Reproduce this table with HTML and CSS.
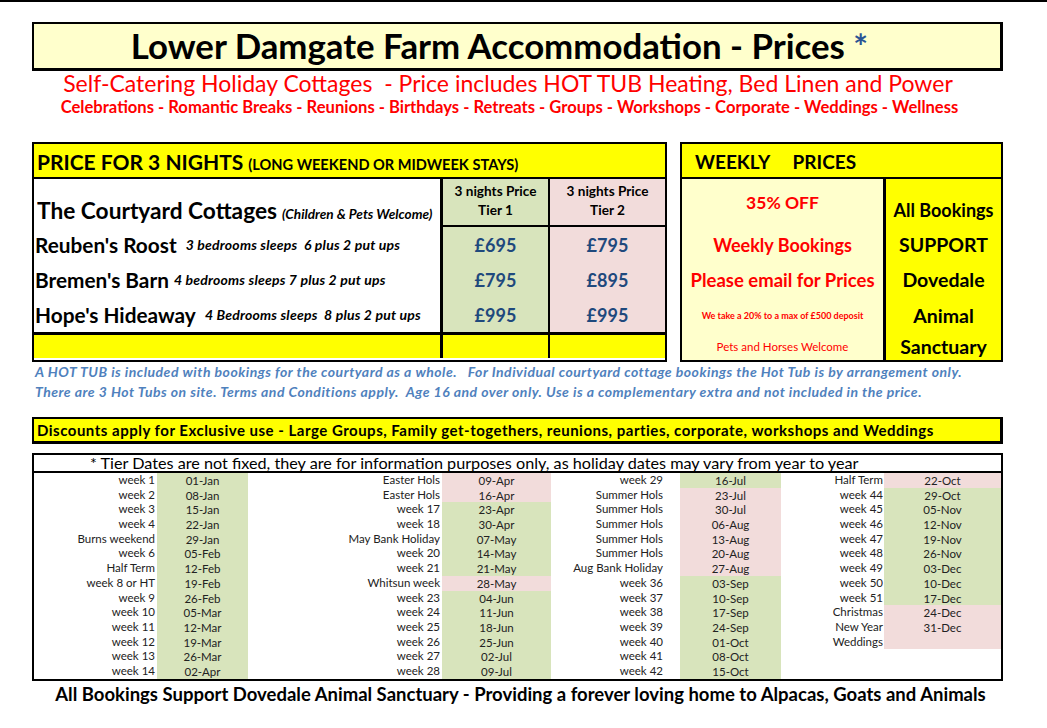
FILE: index.html
```html
<!DOCTYPE html>
<html>
<head>
<meta charset="utf-8">
<link rel="stylesheet" href="styles.css">
</head>
<body>
<div class="page">
  <div class="title-box"><h1 class="title">Lower Damgate Farm Accommodation - Prices <span class="ast">*</span></h1></div>
  <div class="sub1">Self-Catering Holiday Cottages&nbsp; - Price includes HOT TUB Heating, Bed Linen and Power</div>
  <div class="sub2">Celebrations - Romantic Breaks - Reunions - Birthdays - Retreats - Groups - Workshops - Corporate - Weddings - Wellness</div>

  <div class="prices">
    <div class="p3">
      <div class="p3-head"><span class="big">PRICE FOR 3 NIGHTS</span> <span class="small">(LONG WEEKEND OR MIDWEEK STAYS)</span></div>
      <div class="name-top"><span class="cy">The Courtyard Cottages</span> <em class="cy-note">(Children &amp; Pets Welcome)</em></div>
      <div class="tier-h t1">3 nights Price<br>Tier 1</div>
      <div class="tier-h t2">3 nights Price<br>Tier 2</div>
      <div class="names">
        <div class="nm"><span class="cot">Reuben's Roost</span>&nbsp; <em class="det">3 bedrooms sleeps&nbsp; 6 plus 2 put ups</em></div>
        <div class="nm"><span class="cot">Bremen's Barn</span> <em class="det">4 bedrooms sleeps 7 plus 2 put ups</em></div>
        <div class="nm"><span class="cot">Hope's Hideaway</span>&nbsp; <em class="det">4 Bedrooms sleeps&nbsp; 8 plus 2 put ups</em></div>
      </div>
      <div class="tier-p t1"><div>£695</div><div>£795</div><div>£995</div></div>
      <div class="tier-p t2"><div>£795</div><div>£895</div><div>£995</div></div>
      <div class="foot f1"></div>
      <div class="foot f2"></div>
      <div class="foot f3"></div>
    </div>

    <div class="wk">
      <div class="wk-head">WEEKLY&nbsp;&nbsp;&nbsp;&nbsp; PRICES</div>
      <div class="wk-left">
        <div class="r1 red-m">35% OFF</div>
        <div class="red-l">Weekly Bookings</div>
        <div class="red-l">Please email for Prices</div>
        <div class="red-xs">We take a 20% to a max of £500 deposit</div>
        <div class="red-s">Pets and Horses Welcome</div>
      </div>
      <div class="wk-right">
        <div class="r1b">All Bookings</div>
        <div>SUPPORT</div>
        <div>Dovedale</div>
        <div>Animal</div>
        <div>Sanctuary</div>
      </div>
    </div>
  </div>

  <div class="notes">
    <p>A HOT TUB is included with bookings for the courtyard as a whole.&nbsp;&nbsp; For Individual courtyard cottage bookings the Hot Tub is by arrangement only.</p>
    <p>There are 3 Hot Tubs on site. Terms and Conditions apply.&nbsp; Age 16 and over only. Use is a complementary extra and not included in the price.</p>
  </div>

  <div class="discount">Discounts apply for Exclusive use - Large Groups, Family get-togethers, reunions, parties, corporate, workshops and Weddings</div>

  <div class="dates">
    <div class="dates-head">* Tier Dates are not fixed, they are for information purposes only, as holiday dates may vary from year to year</div>
    <div class="dates-body">
      <div class="grp g1">
        <div class="lb">week 1</div><div class="dt g">01-Jan</div>
        <div class="lb">week 2</div><div class="dt g">08-Jan</div>
        <div class="lb">week 3</div><div class="dt g">15-Jan</div>
        <div class="lb">week 4</div><div class="dt g">22-Jan</div>
        <div class="lb">Burns weekend</div><div class="dt g">29-Jan</div>
        <div class="lb">week 6</div><div class="dt g">05-Feb</div>
        <div class="lb">Half Term</div><div class="dt g">12-Feb</div>
        <div class="lb">week 8 or HT</div><div class="dt g">19-Feb</div>
        <div class="lb">week 9</div><div class="dt g">26-Feb</div>
        <div class="lb">week 10</div><div class="dt g">05-Mar</div>
        <div class="lb">week 11</div><div class="dt g">12-Mar</div>
        <div class="lb">week 12</div><div class="dt g">19-Mar</div>
        <div class="lb">week 13</div><div class="dt g">26-Mar</div>
        <div class="lb">week 14</div><div class="dt g">02-Apr</div>
      </div>
      <div class="grp g2">
        <div class="lb">Easter Hols</div><div class="dt p">09-Apr</div>
        <div class="lb">Easter Hols</div><div class="dt p">16-Apr</div>
        <div class="lb">week 17</div><div class="dt g">23-Apr</div>
        <div class="lb">week 18</div><div class="dt g">30-Apr</div>
        <div class="lb">May Bank Holiday</div><div class="dt g">07-May</div>
        <div class="lb">week 20</div><div class="dt g">14-May</div>
        <div class="lb">week 21</div><div class="dt g">21-May</div>
        <div class="lb">Whitsun week</div><div class="dt p">28-May</div>
        <div class="lb">week 23</div><div class="dt g">04-Jun</div>
        <div class="lb">week 24</div><div class="dt g">11-Jun</div>
        <div class="lb">week 25</div><div class="dt g">18-Jun</div>
        <div class="lb">week 26</div><div class="dt g">25-Jun</div>
        <div class="lb">week 27</div><div class="dt g">02-Jul</div>
        <div class="lb">week 28</div><div class="dt g">09-Jul</div>
      </div>
      <div class="grp g3">
        <div class="lb">week 29</div><div class="dt g">16-Jul</div>
        <div class="lb">Summer Hols</div><div class="dt p">23-Jul</div>
        <div class="lb">Summer Hols</div><div class="dt p">30-Jul</div>
        <div class="lb">Summer Hols</div><div class="dt p">06-Aug</div>
        <div class="lb">Summer Hols</div><div class="dt p">13-Aug</div>
        <div class="lb">Summer Hols</div><div class="dt p">20-Aug</div>
        <div class="lb">Aug Bank Holiday</div><div class="dt p">27-Aug</div>
        <div class="lb">week 36</div><div class="dt g">03-Sep</div>
        <div class="lb">week 37</div><div class="dt g">10-Sep</div>
        <div class="lb">week 38</div><div class="dt g">17-Sep</div>
        <div class="lb">week 39</div><div class="dt g">24-Sep</div>
        <div class="lb">week 40</div><div class="dt g">01-Oct</div>
        <div class="lb">week 41</div><div class="dt g">08-Oct</div>
        <div class="lb">week 42</div><div class="dt g">15-Oct</div>
      </div>
      <div class="grp g4">
        <div class="lb">Half Term</div><div class="dt p">22-Oct</div>
        <div class="lb">week 44</div><div class="dt g">29-Oct</div>
        <div class="lb">week 45</div><div class="dt g">05-Nov</div>
        <div class="lb">week 46</div><div class="dt g">12-Nov</div>
        <div class="lb">week 47</div><div class="dt g">19-Nov</div>
        <div class="lb">week 48</div><div class="dt g">26-Nov</div>
        <div class="lb">week 49</div><div class="dt g">03-Dec</div>
        <div class="lb">week 50</div><div class="dt g">10-Dec</div>
        <div class="lb">week 51</div><div class="dt g">17-Dec</div>
        <div class="lb">Christmas</div><div class="dt p">24-Dec</div>
        <div class="lb">New Year</div><div class="dt p">31-Dec</div>
        <div class="lb">Weddings</div><div class="dt p"></div>
        <div class="lb"></div><div class="dt"></div>
        <div class="lb"></div><div class="dt"></div>
      </div>
    </div>
  </div>

  <div class="footer">All Bookings Support Dovedale Animal Sanctuary - Providing a forever loving home to Alpacas, Goats and Animals</div>
</div>
</body>
</html>
```

FILE: styles.css
```css
* { box-sizing: border-box; }
body {
  margin: 0;
  background: #fff;
  font-family: Lato, "Open Sans", "Liberation Sans", sans-serif;
  color: #000;
}
.page {
  width: 1047px;
  height: 728px;
  border-top: 2px solid #000;
  overflow: hidden;
}

/* Title */
.title-box {
  margin: 20px 0 0 32px;
  width: 971px;
  height: 49px;
  background: #ffffcc;
  border: 2px solid #000;
  border-right-width: 3px;
  border-bottom-width: 3px;
  display: flex;
  align-items: center;
  justify-content: center;
  padding-right: 35px;
}
.title {
  margin: 0;
  font-size: 34.8px;
  font-weight: 700;
  line-height: 1;
}
.ast { color: #2a5594; }
.sub1 {
  color: #ff0000;
  font-size: 23px;
  line-height: 24px;
  text-align: center;
  padding-right: 31px;
  white-space: nowrap;
}
.sub2 {
  color: #ff0000;
  font-size: 16.6px;
  font-weight: 700;
  line-height: 22px;
  margin-top: 1px;
  text-align: center;
  padding-right: 28px;
  white-space: nowrap;
}

/* Price tables */
.prices {
  display: flex;
  margin: 24px 0 0 32px;
  gap: 13px;
  align-items: flex-start;
}
.p3 {
  width: 635px;
  height: 220px;
  border: 2px solid #000;
  display: grid;
  grid-template-columns: 409px 107px 115px;
  grid-template-rows: 35px 48px 105px 26px;
}
.p3-head {
  grid-column: 1 / 4;
  background: #ffff00;
  border-bottom: 2px solid #000;
  display: flex;
  align-items: baseline;
  padding: 5px 0 0 3px;
  font-weight: 700;
  white-space: nowrap;
}
.p3-head .big { font-size: 21px; }
.p3-head .small { font-size: 14.6px; margin-left: 5px; }
.name-top {
  grid-column: 1;
  grid-row: 2;
  border-right: 3px solid #000;
  display: flex;
  align-items: baseline;
  padding: 18px 0 0 3px;
  white-space: nowrap;
}
.cy { font-size: 22.7px; font-weight: 700; }
.cy-note { font-size: 13.6px; font-weight: 700; margin-left: 5px; }
.tier-h {
  grid-row: 2;
  border-bottom: 2px solid #000;
  text-align: center;
  font-size: 13.6px;
  font-weight: 700;
  line-height: 19px;
  padding-top: 3px;
}
.t1 { grid-column: 2; background: #d8e4bc; border-right: 2px solid #000; }
.t2 { grid-column: 3; background: #f2dcdb; }
.names {
  grid-column: 1;
  grid-row: 3;
  border-right: 3px solid #000;
  padding-left: 1px;
}
.nm {
  height: 35px;
  display: flex;
  align-items: center;
  white-space: nowrap;
}
.cot { font-size: 20.8px; font-weight: 700; }
.det { font-size: 14px; font-weight: 700; margin-left: 5px; letter-spacing: 0.2px; }
.tier-p { grid-row: 3; }
.tier-p div {
  height: 35px;
  display: flex;
  align-items: center;
  justify-content: center;
  color: #1f497d;
  font-size: 18px;
  font-weight: 700;
}
.foot { grid-row: 4; background: #ffff00; border-top: 3px solid #000; }
.f1 { grid-column: 1; border-right: 3px solid #000; }
.f2 { grid-column: 2; border-right: 2px solid #000; }
.f3 { grid-column: 3; }

.wk {
  width: 323px;
  height: 220px;
  border: 2px solid #000;
  display: grid;
  grid-template-columns: 204px 115px;
  grid-template-rows: 35px 181px;
}
.wk-head {
  grid-column: 1 / 3;
  background: #ffff00;
  border-bottom: 2px solid #000;
  font-size: 19px;
  font-weight: 700;
  padding: 6px 0 0 13px;
  white-space: nowrap;
}
.wk-left {
  background: #ffffcc;
  border-right: 3px solid #000;
  display: grid;
  grid-template-rows: 48px 35px 35px 36px 27px;
  text-align: center;
  color: #ff0000;
  font-weight: 700;
}
.wk-left div, .wk-right div {
  display: flex;
  align-items: center;
  justify-content: center;
  white-space: nowrap;
}
.wk-left .r1 { align-items: flex-start; padding-top: 13px; }
.red-m { font-size: 17.5px; }
.red-l { font-size: 18px; }
.red-l + .red-l { font-size: 18.5px; }
.red-xs { font-size: 9px; }
.red-s { font-size: 11.5px; font-weight: 400; }
.wk-right {
  background: #ffff00;
  display: grid;
  grid-template-rows: 48px 35px 35px 36px 27px;
  font-size: 19.5px;
  font-weight: 700;
}
.wk-right .r1b { align-items: flex-end; padding-bottom: 6px; font-size: 18px; }

/* Notes */
.notes {
  margin: 0 0 0 35px;
  color: #4f81bd;
  font-size: 14px;
  font-weight: 700;
  font-style: italic;
  letter-spacing: 0.5px;
}
.notes p { margin: 0; line-height: 20px; white-space: nowrap; }

/* Discount bar */
.discount {
  margin: 15px 0 0 32px;
  width: 971px;
  height: 27px;
  background: #ffff00;
  border: 2px solid #000;
  border-right-width: 3px;
  border-bottom-width: 3px;
  font-size: 15px;
  letter-spacing: 0.5px;
  font-weight: 700;
  line-height: 20px;
  padding: 1px 0 0 3px;
  white-space: nowrap;
}

/* Dates table */
.dates {
  margin: 9px 0 0 32px;
  width: 971px;
  height: 228px;
  border: 2px solid #000;
}
.dates-head {
  height: 18px;
  border-bottom: 2px solid #000;
  font-size: 16.2px;
  line-height: 15px;
  padding-left: 56px;
  white-space: nowrap;
}
.dates-body { display: flex; }
.grp {
  display: grid;
  grid-template-rows: repeat(14, 14.7px);
  font-size: 11.5px;
  color: #222;
}
.g1 { grid-template-columns: 123px 91px; }
.g2 { grid-template-columns: 194px 109px; }
.g3 { grid-template-columns: 129px 101px; }
.g4 { grid-template-columns: 103px 117px; }
.lb {
  text-align: right;
  padding-right: 2px;
  line-height: 14.7px;
  white-space: nowrap;
}
.g3 .lb { padding-right: 17px; }
.g4 .lb { padding-right: 1px; }
.dt {
  text-align: center;
  line-height: 15.5px;
}
.dt.g { background: #d8e4bc; }
.dt.p { background: #f2dcdb; }

.footer {
  margin-top: 1px;
  text-align: center;
  font-size: 18.5px;
  font-weight: 700;
  line-height: 24px;
  padding-right: 6px;
  white-space: nowrap;
}
```
